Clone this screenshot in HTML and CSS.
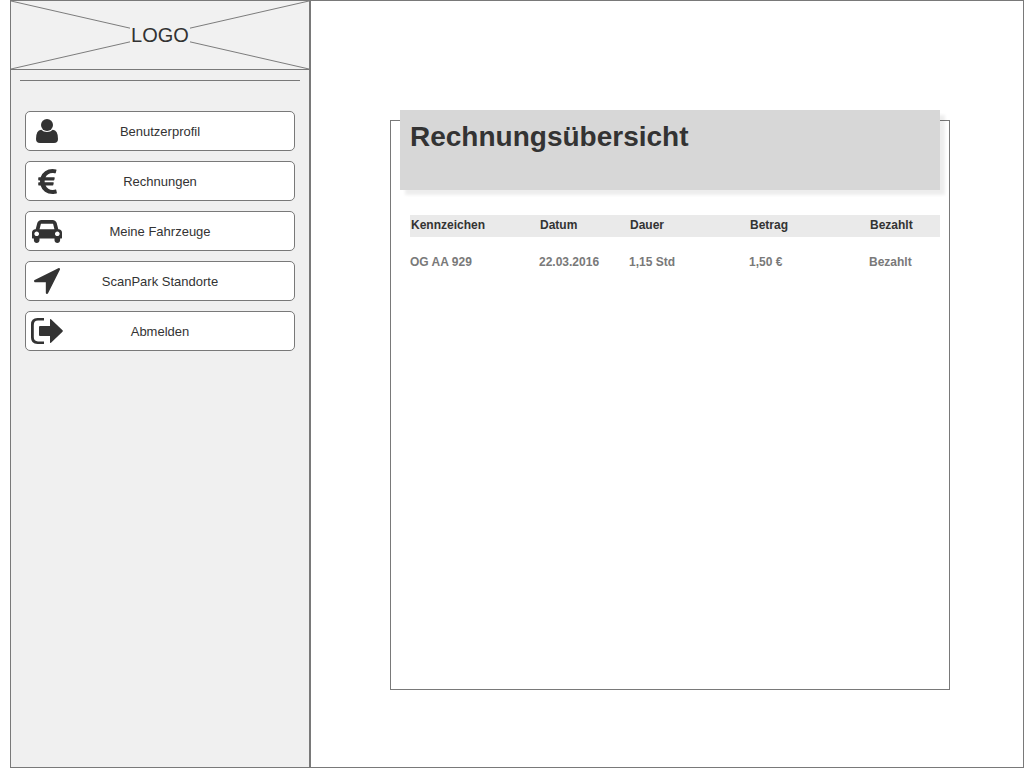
FILE: index.html
```html
<!DOCTYPE html>
<html lang="de">
<head>
<meta charset="utf-8">
<title>Rechnungsübersicht</title>
<link rel="stylesheet" href="styles.css">
</head>
<body>
<div class="app">
  <aside class="sidebar">
    <div class="logo">
      <svg class="logo-cross" viewBox="0 0 300 70" preserveAspectRatio="none" aria-hidden="true"><path d="M0 0L300 70M0 70L300 0"/></svg>
      <span class="logo-text">LOGO</span>
    </div>
    <hr class="rule">
    <nav class="menu">
      <button class="item" type="button">
        <span class="icon"><svg width="22" height="24" viewBox="0 0 22 24"><circle cx="11" cy="6" r="6"/><path d="M5.200 10.800Q7.500 13 11 13t5.800-2.200Q22 11.200 22 20q0 4-4 4H4q-4 0-4-4 0-8.800 5.200-9.200z"/></svg></span>
        <span class="label">Benutzerprofil</span>
      </button>
      <button class="item" type="button">
        <span class="icon"><svg width="19" height="25" viewBox="371 128 1030 1408" preserveAspectRatio="none"><path d="M1360 1307l35 159q3 12-3 22.500t-17 14.500l-5 1q-4 2-10.500 3.500t-16 4.500-21.500 5.500-25.500 5-30 5-33.500 4.500-36.500 3-38.500 1q-234 0-409-130.500t-238-351.500h-95q-13 0-22.500-9.500t-9.500-22.500v-113q0-13 9.500-22.500t22.500-9.500h66q-2-57 1-105h-67q-14 0-23-9t-9-23v-114q0-14 9-23t23-9h98q67-210 243.500-338t400.500-128q102 0 194 23 11 3 20 15 6 11 3 24l-43 159q-3 13-14 19.500t-24 2.500l-4-1q-4-1-11.500-2.500l-17.500-3.500-22.500-3.500-26-3-29-2.500-29.500-1q-126 0-226 64t-150 176h468q16 0 25 12 10 12 7 26l-24 114q-5 26-32 26h-488q-3 37 0 105h459q15 0 25 12 9 12 6 27l-24 112q-2 11-11 18.500t-20 7.500h-387q48 117 149.500 185.500t228.500 68.500q18 0 36-1.500t33.500-3.500 29.500-4.500 24.500-5 18.500-4.500l12-3 5-2q13-5 26 2 12 7 15 21z"/></svg></span>
        <span class="label">Rechnungen</span>
      </button>
      <button class="item" type="button">
        <span class="icon"><svg width="30" height="23" viewBox="0 128 2048 1600" preserveAspectRatio="none"><path d="M480 1088q0-66-47-113t-113-47-113 47-47 113 47 113 113 47 113-47 47-113zm36-320h1016l-89-357q-2-8-14-17.500t-21-9.500h-768q-9 0-21 9.500t-14 17.500zm1372 320q0-66-47-113t-113-47-113 47-47 113 47 113 113 47 113-47 47-113zm160-96v384q0 14-9 23t-23 9h-96v128q0 80-56 136t-136 56-136-56-56-136v-128h-1024v128q0 80-56 136t-136 56-136-56-56-136v-128h-96q-14 0-23-9t-9-23v-384q0-93 65.500-158.500t158.500-65.500h28l105-419q23-94 104-157.500t179-63.500h768q98 0 179 63.500t104 157.500l105 419h28q93 0 158.500 65.500t65.500 158.500z"/></svg></span>
        <span class="label">Meine Fahrzeuge</span>
      </button>
      <button class="item" type="button">
        <span class="icon"><svg width="26" height="26" viewBox="192 256 1408 1408"><path d="M1593 349l-640 1280q-17 35-57 35-5 0-15-2-22-5-35.500-22.500t-13.500-39.500v-576h-576q-22 0-39.500-13.500t-22.500-35.500 4-42 29-30l1280-640q13-7 29-7 27 0 45 19 15 14 18.500 34.500t-6.500 39.500z"/></svg></span>
        <span class="label">ScanPark Standorte</span>
      </button>
      <button class="item" type="button">
        <span class="icon"><svg width="32" height="26" viewBox="0 0 32 26"><path d="M13 0v2.600H7Q2.800 2.600 2.800 7v12Q2.800 23.400 7 23.400h6V26H6.500Q0 26 0 19.500v-13Q0 0 6.500 0z"/><path d="M9 8h10V1.800q0-1.300 1-.5l11.500 11q.7.700 0 1.400L20 24.800q-1 .8-1-.5V18H9q-1 0-1-1V9q0-1 1-1z"/></svg></span>
        <span class="label">Abmelden</span>
      </button>
    </nav>
  </aside>
  <main class="main">
    <section class="panel">
      <header class="banner"><h1>Rechnungsübersicht</h1></header>
      <table class="bills">
        <colgroup><col class="plate"><col class="date"><col class="time"><col class="sum"><col class="paid"></colgroup>
        <thead><tr><th>Kennzeichen</th><th>Datum</th><th>Dauer</th><th>Betrag</th><th>Bezahlt</th></tr></thead>
        <tbody><tr><td>OG AA 929</td><td>22.03.2016</td><td>1,15 Std</td><td>1,50 €</td><td>Bezahlt</td></tr></tbody>
      </table>
    </section>
  </main>
</div>
</body>
</html>
```
FILE: styles.css
```css
* { box-sizing: border-box; }
body {
  margin: 0;
  background: #fff;
  color: #333;
  font-family: "Liberation Sans", Arial, sans-serif;
}
.app {
  display: flex;
  min-height: 100vh;
  padding-left: 10px;
}
.sidebar {
  flex: 0 0 300px;
  background: #f0f0f0;
  border: 1px solid #797979;
  border-top: 0;
}
.logo {
  display: grid;
  place-items: center;
  height: 70px;
  margin: 0 -1px;
  border: 1px solid #797979;
  background: #f1f1f1;
}
.logo-cross {
  grid-area: 1 / 1;
  width: 100%;
  height: 68px;
  fill: none;
  stroke: #797979;
}
.logo-text {
  grid-area: 1 / 1;
  z-index: 1;
  padding: 0 1px;
  background: #f1f1f1;
  font-size: 20px;
  line-height: 16px;
}
.rule {
  height: 1px;
  margin: 10px 9px 30px;
  border: 0;
  background: #797979;
}
.menu {
  display: grid;
  gap: 10px;
  padding: 0 14px;
}
.item {
  display: flex;
  align-items: center;
  height: 40px;
  padding: 0;
  border: 1px solid #797979;
  border-radius: 5px;
  background: #fff;
  color: #333;
  font: 13px/16px "Liberation Sans", Arial, sans-serif;
}
.icon {
  display: flex;
  flex: 0 0 42px;
  justify-content: center;
}
.icon svg { fill: #333; }
.label {
  flex: 1;
  padding: 2px 42px 0 0;
  text-align: center;
}
.main {
  flex: 1;
  display: flex;
  border: 1px solid #797979;
  padding: 119px 73px 77px 79px;
}
.panel {
  flex: 1;
  border: 1px solid #797979;
  padding: 0 9px;
}
.banner {
  height: 80px;
  margin-top: -11px;
  padding: 11px 10px;
  background: #d7d7d7;
  box-shadow: 5px 5px 3px rgba(0, 0, 0, 0.07);
}
h1 {
  margin: 0;
  font-size: 28px;
  line-height: 32px;
}
.bills {
  width: calc(100% - 10px);
  margin: 25px 0 0 10px;
  border-collapse: collapse;
  table-layout: fixed;
  font-size: 12px;
  line-height: 14px;
  font-weight: bold;
  text-align: left;
}
.plate { width: 129px; }
.date { width: 90px; }
.time { width: 120px; }
.sum { width: 120px; }
th {
  height: 22px;
  padding: 3px 1px 5px;
  background: #eaeaea;
}
td {
  padding: 18px 0 0;
  color: #797979;
}
```
